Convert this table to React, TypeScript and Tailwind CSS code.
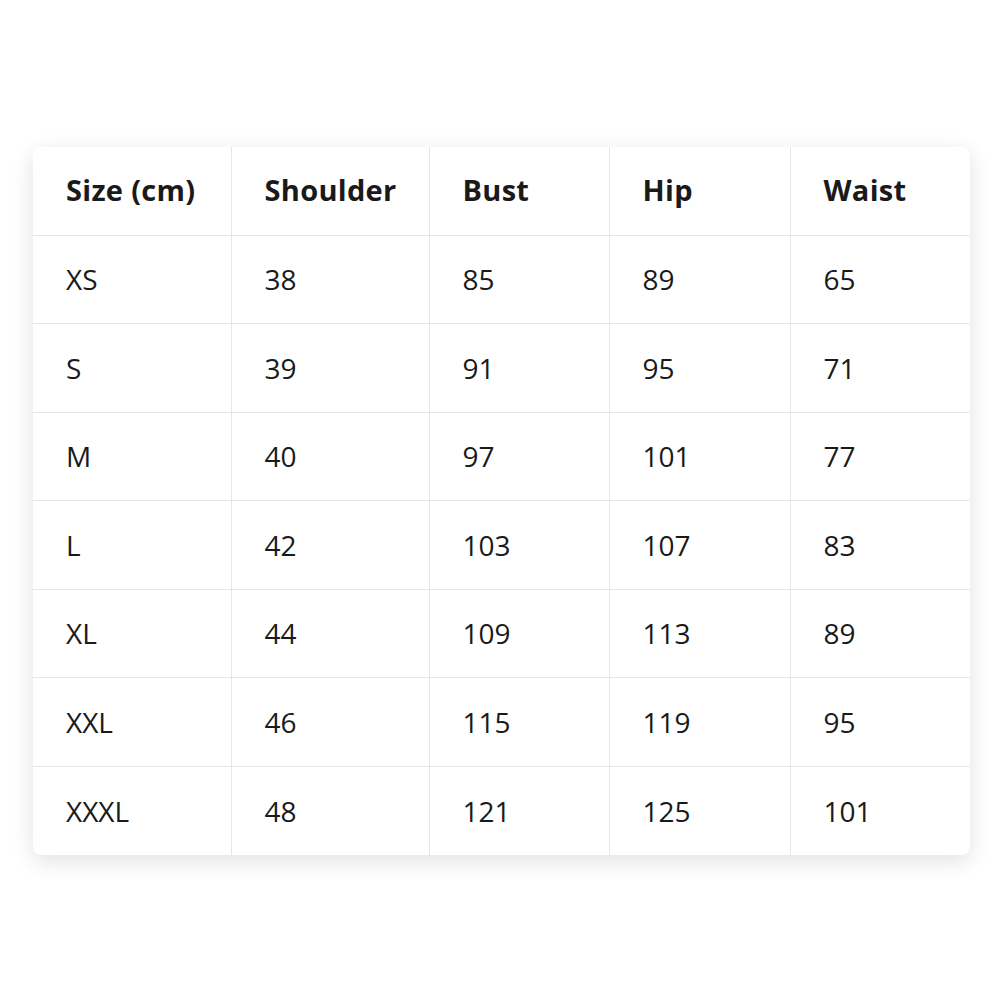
import React from 'react';

const headers = ['Size (cm)', 'Shoulder', 'Bust', 'Hip', 'Waist'];

const rows: string[][] = [
  ['XS', '38', '85', '89', '65'],
  ['S', '39', '91', '95', '71'],
  ['M', '40', '97', '101', '77'],
  ['L', '42', '103', '107', '83'],
  ['XL', '44', '109', '113', '89'],
  ['XXL', '46', '115', '119', '95'],
  ['XXXL', '48', '121', '125', '101'],
];

const colWidths = ['w-[198px]', 'w-[198px]', 'w-[180px]', 'w-[181px]', 'w-[180px]'];

const App: React.FC = () => {
  return (
    <div className="w-[1000px] h-[1000px] bg-white pt-[147px] pl-[33px] font-['Open_Sans',sans-serif] text-[#1a1a1a]">
      <div className="w-[937px] rounded-lg bg-white shadow-[0_6px_22px_rgba(0,0,0,0.12)] overflow-hidden">
        <table className="w-full border-collapse table-fixed">
          <colgroup>
            {colWidths.map((w, i) => (
              <col key={i} className={w} />
            ))}
          </colgroup>
          <thead>
            <tr className="h-[88px]">
              {headers.map((h, i) => (
                <th
                  key={h}
                  className={`text-left font-bold text-[29px] tracking-[0.3px] pl-[33px] pb-[2px] border-b border-[#e6e6e6] ${i > 0 ? 'border-l' : ''}`}
                >
                  {h}
                </th>
              ))}
            </tr>
          </thead>
          <tbody>
            {rows.map((r, ri) => (
              <tr key={r[0]} className="h-[88.5px]">
                {r.map((c, i) => (
                  <td
                    key={i}
                    className={`text-[28px] pl-[33px] border-[#e6e6e6] ${i > 0 ? 'border-l' : ''} ${ri < rows.length - 1 ? 'border-b' : ''}`}
                  >
                    {c}
                  </td>
                ))}
              </tr>
            ))}
          </tbody>
        </table>
      </div>
    </div>
  );
};

export default App;
